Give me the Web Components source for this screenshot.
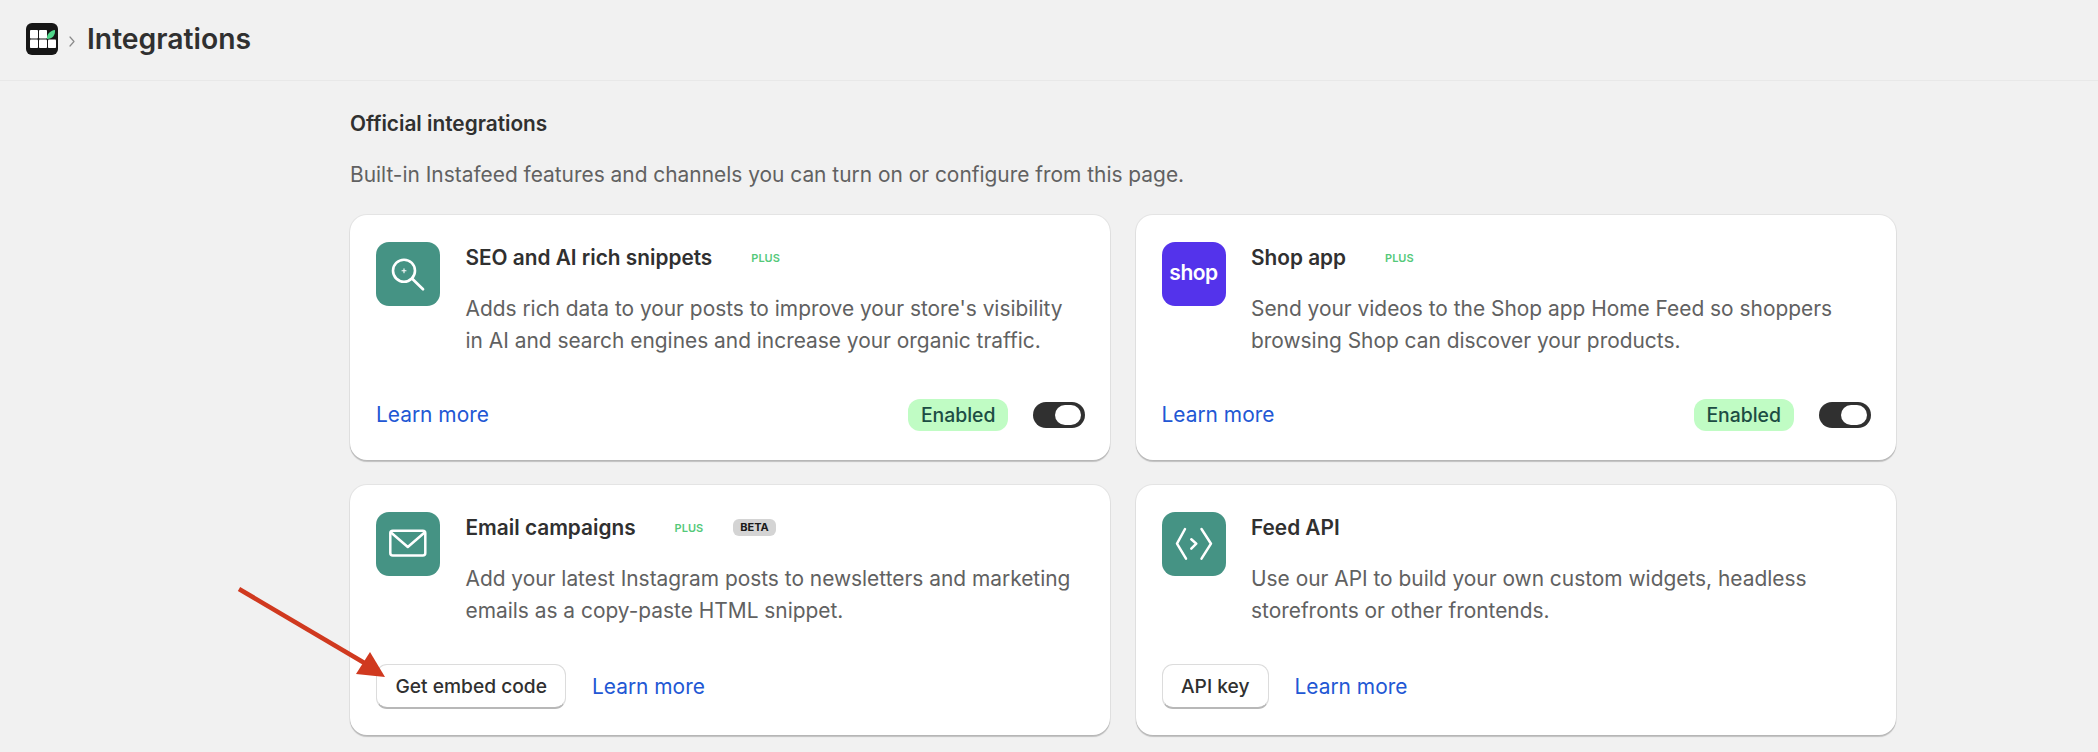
<!DOCTYPE html>
<html>
<head>
<meta charset="utf-8">
<title>Integrations</title>
<style>
html, body { margin: 0; background: #f1f1f1; }
body { font-family: Inter, "Liberation Sans", sans-serif; color: #303030; overflow: hidden; }
.shop { color: #fff; font: 600 21px/1 Inter, sans-serif; letter-spacing: -.5px; padding-bottom: 3px; }
</style>
</head>
<body>
<if-page>
  <if-header>Integrations</if-header>
  <if-section heading="Official integrations" intro="Built-in Instafeed features and channels you can turn on or configure from this page.">
    <if-card heading="SEO and AI rich snippets" toggle plus>
      <svg slot="icon" viewBox="0 0 64 64" width="64" height="64" fill="none" stroke="#fff" stroke-linecap="round"><circle cx="28" cy="28.700" r="11" stroke-width="2.600"/><path d="M36.500 37 47 47.300" stroke-width="2.700"/><path d="M28 26.700v4M26 28.700h4" stroke-width="1.100"/></svg>
      Adds rich data to your posts to improve your store's visibility in AI and search engines and increase your organic traffic.
      <if-toggle slot="end"></if-toggle>
    </if-card>
    <if-card heading="Shop app" toggle plus purple>
      <span slot="icon" class="shop">shop</span>
      Send your videos to the Shop app Home Feed so shoppers browsing Shop can discover your products.
      <if-toggle slot="end"></if-toggle>
    </if-card>
    <if-card heading="Email campaigns" plus beta action="Get embed code">
      <svg slot="icon" viewBox="0 0 64 64" width="64" height="64" fill="none" stroke="#fff" stroke-width="2.500" stroke-linejoin="round" stroke-linecap="round"><rect x="14.300" y="18.700" width="35" height="24.800" rx="2.500"/><path d="M15 20.500 31.800 35 48.600 20.500"/></svg>
      Add your latest Instagram posts to newsletters and marketing emails as a copy-paste HTML snippet.
    </if-card>
    <if-card heading="Feed API" action="API key">
      <svg slot="icon" viewBox="0 0 64 64" width="64" height="64" fill="none" stroke="#fff" stroke-width="2.500" stroke-linecap="round" stroke-linejoin="round"><path d="M23 17 15 31.700l9 15M39.500 17 49 31.700l-9.500 15M29.300 27.300l5 4.400-5 5"/></svg>
      Use our API to build your own custom widgets, headless storefronts or other frontends.
    </if-card>
  </if-section>
  <svg class="arrow" width="160" height="100" viewBox="0 0 160 100"><path d="M2 2 136 81" stroke="#d0391f" stroke-width="4.600"/><path d="M148 90 133 65 119 87z" fill="#d0391f"/></svg>
</if-page>

<script>
class IfPage extends HTMLElement {
  constructor() {
    super();
    this.attachShadow({ mode: 'open' }).innerHTML = `
      <style>
        :host { display: block; position: relative; width: 2098px; height: 752px; overflow: hidden; }
        ::slotted(.arrow) { position: absolute; left: 237px; top: 587px; }
      </style>
      <slot></slot>`;
  }
}
customElements.define('if-page', IfPage);

class IfHeader extends HTMLElement {
  constructor() {
    super();
    this.attachShadow({ mode: 'open' }).innerHTML = `
      <style>
        :host { display: flex; align-items: center; height: 81px; box-sizing: border-box; padding: 0 0 2px 26px; border-bottom: 1px solid #e8e8e8; }
        .chev { margin: 5px 12px 0 11px; display: flex; }
        h1 { margin: 0; font: 600 28.300px/36px Inter, sans-serif; color: #303030; }
      </style>
      <svg width="32" height="32" viewBox="0 0 32 32">
        <rect width="32" height="32" rx="6" fill="#161616"/>
        <g fill="#fff">
          <rect x="4" y="7" width="8" height="8.500" rx=".8"/>
          <rect x="13" y="7" width="8" height="8.500" rx=".8"/>
          <rect x="4" y="16.500" width="8" height="8.500" rx=".8"/>
          <rect x="13" y="16.500" width="8" height="8.500" rx=".8"/>
          <rect x="22" y="16.500" width="8" height="8.500" rx=".8"/>
        </g>
        <path d="M21 16c-.5-4.500 3-8.500 8-9 .5 5-2.500 9-8 9z" fill="#4fd68a"/>
      </svg>
      <span class="chev"><svg width="6" height="11" viewBox="0 0 6 11" fill="none" stroke="#8a8a8a" stroke-width="1.200" stroke-linecap="round" stroke-linejoin="round"><path d="M1 1 5 5.500 1 10"/></svg></span>
      <h1><slot></slot></h1>`;
  }
}
customElements.define('if-header', IfHeader);

class IfSection extends HTMLElement {
  constructor() {
    super();
    this.attachShadow({ mode: 'open' }).innerHTML = `
      <style>
        :host { display: block; width: 1546px; margin-left: 350px; padding-top: 29px; }
        h2 { margin: 0; font: 600 20.800px/28px Inter, sans-serif; color: #303030; }
        p { margin: 23px 0 26px; font: 400 20.900px/28px Inter, sans-serif; color: #616161; }
        .grid { display: grid; grid-template-columns: 760px 760px; grid-template-rows: 245px 250px; gap: 25px 25.500px; }
      </style>
      <h2></h2>
      <p></p>
      <div class="grid"><slot></slot></div>`;
  }
  connectedCallback() {
    this.shadowRoot.querySelector('h2').textContent = this.getAttribute('heading');
    this.shadowRoot.querySelector('p').textContent = this.getAttribute('intro');
  }
}
customElements.define('if-section', IfSection);

class IfToggle extends HTMLElement {
  constructor() {
    super();
    this.attachShadow({ mode: 'open' }).innerHTML = `
      <style>
        :host { display: flex; justify-content: flex-end; align-items: center; box-sizing: border-box; width: 52px; height: 26px; padding: 3px 4px; border-radius: 13px; background: #303030; }
        i { display: block; width: 26px; height: 20px; border-radius: 10px; background: #fff; }
      </style>
      <i></i>`;
  }
}
customElements.define('if-toggle', IfToggle);

const cardTemplate = document.createElement('template');
cardTemplate.innerHTML = `
<style>
  :host { display: flex; flex-direction: column; box-sizing: border-box; padding: 27px 25px 26px 26px; background: #fff; border-radius: 17px; box-shadow: 0 1.5px 1px rgba(0,0,0,.2), 0 0 0 1px rgba(0,0,0,.05); }
  :host([toggle]) { padding-bottom: 29px; }
  .top { display: flex; gap: 25.500px; }
  .icon { flex: none; width: 64px; height: 64px; border-radius: 13px; background: #459384; display: flex; align-items: center; justify-content: center; overflow: hidden; }
  :host([purple]) .icon { background: #5433eb; }
  .title { display: flex; align-items: center; height: 32px; margin-top: -.5px; color: #303030; font: 600 20.800px/32px Inter, sans-serif; }
  .plus { margin-left: 39px; color: #55c97a; font: 600 11px/16px Inter, sans-serif; }
  .beta { margin-left: 30px; padding: 0 7px; border-radius: 6px; background: #d4d4d4; color: #1a1a1a; font: 700 11px/17px Inter, sans-serif; }
  .desc { margin-top: 19px; width: 615px; color: #616161; font: 400 20.900px/32px Inter, sans-serif; }
  .foot { margin-top: auto; display: flex; align-items: center; }
  button { height: 45px; box-sizing: border-box; padding: 0 18.500px; margin-right: 25.500px; border: 1px solid #dcdcdc; border-bottom: 2px solid #b8b8b8; border-radius: 11px; background: #fff; color: #303030; font: 500 19.200px Inter, sans-serif; }
  a { color: #2257d4; font: 400 20.900px/32px Inter, sans-serif; text-decoration: none; }
  .end { margin-left: auto; display: flex; align-items: center; gap: 25px; }
  .badge { height: 32px; padding: 0 12.500px; border-radius: 12px; background: #c0fcc4; color: #1c4d43; font: 500 19.400px/32px Inter, sans-serif; }
</style>
<div class="top">
  <div class="icon"><slot name="icon"></slot></div>
  <div>
    <div class="title"><span class="name"></span></div>
    <div class="desc"><slot></slot></div>
  </div>
</div>
<div class="foot"></div>`;

class IfCard extends HTMLElement {
  constructor() {
    super();
    this.attachShadow({ mode: 'open' }).appendChild(cardTemplate.content.cloneNode(true));
  }
  connectedCallback() {
    const root = this.shadowRoot;
    root.querySelector('.name').textContent = this.getAttribute('heading');
    const title = root.querySelector('.title');
    if (this.hasAttribute('plus')) title.insertAdjacentHTML('beforeend', '<span class="plus">PLUS</span>');
    if (this.hasAttribute('beta')) title.insertAdjacentHTML('beforeend', '<span class="beta">BETA</span>');
    const foot = root.querySelector('.foot');
    if (this.hasAttribute('action')) {
      const b = document.createElement('button');
      b.textContent = this.getAttribute('action');
      foot.appendChild(b);
    }
    foot.insertAdjacentHTML('beforeend', '<a href="#">Learn more</a>');
    if (this.hasAttribute('toggle')) {
      foot.insertAdjacentHTML('beforeend', '<div class="end"><span class="badge">Enabled</span><slot name="end"></slot></div>');
    }
  }
}
customElements.define('if-card', IfCard);
</script>
</body>
</html>
